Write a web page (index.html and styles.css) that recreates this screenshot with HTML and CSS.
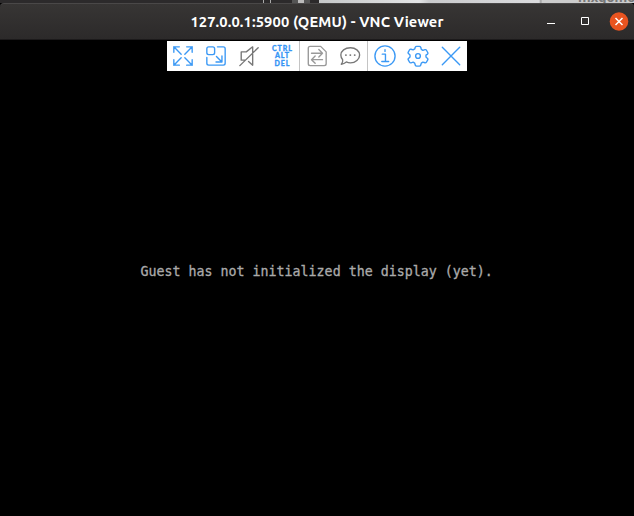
FILE: index.html
```
<!DOCTYPE html>
<html lang="en">
<head>
<meta charset="utf-8">
<title>127.0.0.1:5900 (QEMU) - VNC Viewer</title>
<link rel="stylesheet" href="styles.css">
</head>
<body>
<div class="behind"><span class="behind-dark"><i></i><i></i><b></b></span><span class="behind-light"><span class="behind-text">mxgomo</span></span></div>
<header class="titlebar">
  <h1>127.0.0.1:5900 (QEMU) - VNC Viewer</h1>
  <div class="controls">
    <svg width="12" height="12" viewBox="0 0 12 12"><path d="M2 7.500h8" stroke="#fff"/></svg>
    <svg width="12" height="12" viewBox="0 0 12 12"><path d="M2.500 1.500h7v7h-7z" fill="none" stroke="#fff"/></svg>
    <svg width="20" height="20" viewBox="0 0 20 20"><circle cx="10" cy="9.500" r="9.300" fill="#e95420"/><path d="M6.500 6l7 7m0-7l-7 7" stroke="#fff" stroke-width="1.500"/></svg>
  </div>
</header>
<main class="screen">
  <nav class="toolbar">
    <div class="group group-view">
      <svg class="blue" viewBox="0 0 24 24"><path d="M8 2H2v6M2 2l8 8M16 2h6v6M22 2l-8 8M8 22H2v-6M2 22l8-8M16 22h6v-6M22 22l-8-8"/></svg>
      <svg class="blue" viewBox="0 0 24 24"><rect x="2" y="2" width="8.5" height="8.5" rx="2"/><path d="M13.5 2H20q2 0 2 2v16q0 2-2 2H4q-2 0-2-2v-6.5M12.5 12.5l6 6M18.5 12v6.500H12"/></svg>
      <svg class="gray" viewBox="0 0 24 24"><path d="M16 8.500V2L9 7.500H3.500v9H8M11.500 18l4.500 4V10M2 22.500L22 3"/></svg>
      <div class="cad"><span>CTRL</span><span>ALT</span><span>DEL</span></div>
    </div>
    <div class="group group-talk">
      <svg class="lightgray" viewBox="0 0 24 24"><path d="M4.500 1.500H16l6 6v13q0 2-2 2H4.500q-2 0-2-2v-17q0-2 2-2zM6 9h12M14 5l4 4-4 4M18 16H6M10 12l-4 4 4 4"/></svg>
      <svg class="gray" viewBox="0 0 24 24"><path d="M12.500 3C18 3 22.500 6.500 22.500 11S18 19.500 12.500 19.500q-2.500 0-4.500-1Q5.500 20.500 2.500 21q2-2 1.500-5Q2 14 2 11c0-4.500 4.500-8 10.500-8z"/><path class="dots" d="M7.500 11h.1M12.300 11h.1M17.100 11h.1"/></svg>
    </div>
    <div class="group group-session">
      <svg class="blue info" viewBox="0 0 24 24"><circle cx="12" cy="12" r="11"/><path d="M9 10h3.500v8M8.500 18h7.500M12 5v2"/></svg>
      <svg class="blue" viewBox="0 0 24 24"><path d="M9 2.500q.5-1 1.500-1h3q1 0 1.500 1l.6 2.300 1.700 1 2.300-.7q1-.3 1.600.6l1.400 2.500q.5 1-.2 1.700L20.700 11v2l1.700 1.600q.7.700.2 1.700l-1.400 2.500q-.6.900-1.600.6l-2.300-.7-1.700 1-.6 2.300q-.5 1-1.500 1h-3q-1 0-1.500-1l-.6-2.300-1.700-1-2.300.7q-1 .3-1.600-.6l-1.400-2.500q-.5-1 .2-1.700L3.300 13v-2L1.600 9.400q-.7-.7-.2-1.700l1.400-2.500q.6-.9 1.600-.6l2.300.7 1.700-1z"/><circle cx="12" cy="12" r="2.600"/></svg>
      <svg class="blue" viewBox="0 0 24 24"><path d="M2.500 2.500l19 19m0-19l-19 19"/></svg>
    </div>
  </nav>
  <p class="message">Guest has not initialized the display (yet).</p>
</main>
</body>
</html>
```
FILE: styles.css
```
* { box-sizing: border-box; }
body { margin: 0; width: 634px; height: 516px; overflow: hidden; background: #000; display: flex; flex-direction: column; font-family: "Noto Sans", sans-serif; }
.behind { height: 3px; display: flex; overflow: hidden; }
.behind-dark { width: 319px; background: #2c2a2b; display: flex; padding-left: 263px; }
.behind-dark i { width: 1px; margin-right: 6px; background: #aaa; }
.behind-dark b { width: 18px; margin-left: 15px; background: linear-gradient(90deg, #555 6px, #bbb 6px 12px, #555 12px); }
.behind-light { flex: 1; overflow: hidden; background: linear-gradient(90deg, #c5c7c8, #e3e4e5 100px, #c9cacc 110px, #dcdcde 220px, #999 222px, #ccc 223px); }
.behind-text { display: block; padding-left: 259px; margin-top: -11px; font: bold 13px/16px "Noto Sans", sans-serif; color: #777; }
.titlebar { height: 37px; display: grid; grid-template-columns: 1fr; align-items: center; background: linear-gradient(#373534, #2c2a2a); border-top: 1px solid #4a4848; border-bottom: 1px solid #1c1a1b; border-radius: 4px 4px 0 0; }
h1 { grid-area: 1 / 1; margin: 0; text-align: center; color: #fff; font: bold 14.67px/20px Ubuntu, "Noto Sans", sans-serif; letter-spacing: .13px; }
.controls { grid-area: 1 / 1; justify-self: end; display: flex; align-items: center; padding-right: 5px; gap: 22px; }
.controls svg:last-child { margin-left: -4px; }
.screen { flex: 1; display: flex; flex-direction: column; align-items: center; padding-top: 1px; }
.toolbar { width: 300px; height: 30px; background: #fff; display: flex; }
.group { display: flex; align-items: center; gap: 11px; padding-left: 5px; }
.group + .group { border-left: 1px solid #c4c4c4; }
.group-view { width: 132px; }
.group-talk { width: 68px; padding-left: 6px; }
.group-session { width: 100px; padding-left: 6px; }
.toolbar svg { width: 22px; height: 22px; flex: none; fill: none; stroke-width: 1.5; stroke-linecap: round; stroke-linejoin: round; }
.blue { stroke: #3b99f5; }
.gray { stroke: #777; }
.lightgray { stroke: #999; }
.toolbar .dots { stroke-width: 2; }
.cad { width: 22px; display: flex; flex-direction: column; align-items: center; color: #3695f5; font: 900 7px/7.5px Lato, sans-serif; letter-spacing: 1px; -webkit-text-stroke: .3px #3695f5; }
.cad span { margin-right: -1px; }
.message { margin: 193px 0 0; width: 353px; white-space: nowrap; color: #aaa; font: 13.3px/16px "DejaVu Sans Mono", monospace; -webkit-text-stroke: .3px #aaa; }
```
